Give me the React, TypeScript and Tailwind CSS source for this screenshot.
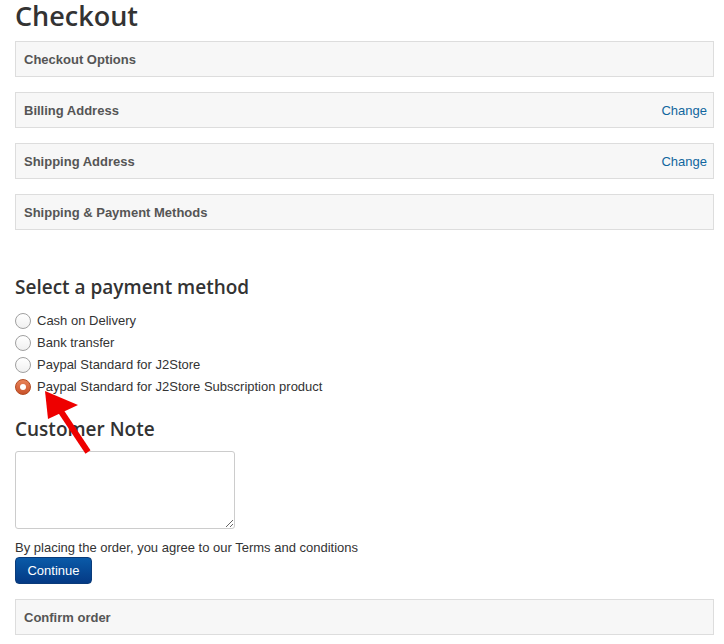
import React from "react";

const panels = [
  { title: "Checkout Options", change: false },
  { title: "Billing Address", change: true },
  { title: "Shipping Address", change: true },
  { title: "Shipping & Payment Methods", change: false },
];

const methods = [
  "Cash on Delivery",
  "Bank transfer",
  "Paypal Standard for J2Store",
  "Paypal Standard for J2Store Subscription product",
];

function Panel({ title, change }: { title: string; change?: boolean }) {
  return (
    <div className="flex h-[36px] items-center justify-between border border-[#dddddd] bg-[#f7f7f7] pl-[8px] pr-[6px] pt-[1px]">
      <span className="text-[13px] font-bold text-[#555555]">{title}</span>
      {change && <a className="text-[13px] text-[#11669e]">Change</a>}
    </div>
  );
}

function Radio({ checked }: { checked?: boolean }) {
  if (checked) {
    return (
      <span className="flex h-[16px] w-[16px] items-center justify-center rounded-full border border-[#b24a20] bg-gradient-to-b from-[#e88358] to-[#c9522a]">
        <span className="h-[6px] w-[6px] rounded-full bg-white" />
      </span>
    );
  }
  return <span className="h-[16px] w-[16px] rounded-full border border-[#a0a0a0] bg-gradient-to-b from-white to-[#f0f0f0]" />;
}

export default function App() {
  return (
    <div className="relative w-[724px] h-[644px] bg-white pl-[15px] pr-[10px] font-['Liberation_Sans',Arial,sans-serif] text-[13px] text-[#333333]">
      <h1 className="mb-[9px] h-[32px] font-['Open_Sans',sans-serif] text-[27px] leading-[32px] font-semibold text-[#333333]">Checkout</h1>

      <div className="flex flex-col gap-[15px]">
        {panels.map((p) => (
          <Panel key={p.title} title={p.title} change={p.change} />
        ))}
      </div>

      <h3 className="mt-[43px] font-['Open_Sans',sans-serif] text-[19px] leading-[28px] font-semibold text-[#333333]">Select a payment method</h3>
      <div className="mt-[9px] flex flex-col">
        {methods.map((m, i) => (
          <label key={m} className="flex h-[22px] items-center gap-[6px]">
            <Radio checked={i === 3} />
            <span className="leading-[18px]">{m}</span>
          </label>
        ))}
      </div>

      <h3 className="mt-[17px] font-['Open_Sans',sans-serif] text-[19px] leading-[28px] font-semibold text-[#333333]">Customer Note</h3>
      <textarea className="mt-[8px] block h-[78px] w-[220px] rounded-[3px] border border-[#cccccc] bg-white" />

      <p className="mt-[10px] leading-[18px]">By placing the order, you agree to our Terms and conditions</p>
      <button className="h-[27px] w-[77px] rounded-[4px] border border-[#0a3b7a] bg-gradient-to-b from-[#0a5aa8] to-[#053a85] text-[13px] text-white">
        Continue
      </button>

      <div className="mt-[15px]">
        <Panel title="Confirm order" />
      </div>

      <svg className="absolute left-0 top-0" width="724" height="644" viewBox="0 0 724 644">
        <line x1="88" y1="452" x2="60" y2="410" stroke="#ee0000" strokeWidth="6" />
        <polygon points="45,391 48,419 78,405" fill="#ee0000" />
      </svg>
    </div>
  );
}
